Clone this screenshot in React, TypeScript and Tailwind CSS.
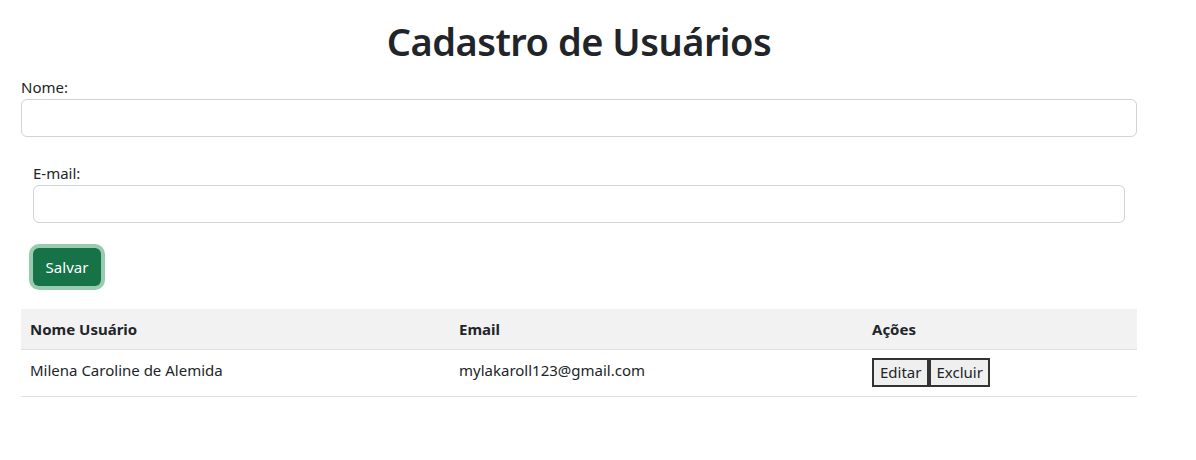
import React from "react";

export default function App() {
  return (
    <div
      className="w-[1196px] h-[460px] bg-white text-[#212529] text-[16px] leading-[24px]"
      style={{ fontFamily: '"Noto Sans", "Open Sans", sans-serif' }}
    >
      <div className="ml-[21px] w-[1116px] pt-[17px]">
        <h1 className="text-center text-[38px] leading-[48px] font-semibold tracking-[-0.5px] mb-[10px]">
          Cadastro de Usuários
        </h1>
        <label className="block text-[15px] leading-[24px]">Nome:</label>
        <input
          type="text"
          className="block w-full h-[38px] border border-[#ced4da] rounded-[6px] bg-white px-3"
        />
        <div className="mt-[12px] p-[12px]">
          <label className="block text-[15px] leading-[24px]">E-mail:</label>
          <input
            type="email"
            className="block w-full h-[38px] border border-[#ced4da] rounded-[6px] bg-white px-3"
          />
          <button
            type="button"
            className="mt-[25px] h-[38px] w-[68px] rounded-[6px] bg-[#157347] text-white text-[15px] ring-4 ring-[#98cbb0]"
          >
            Salvar
          </button>
        </div>
        <table className="mt-[11px] w-full border-collapse text-[15px]">
          <thead>
            <tr className="bg-[#f2f2f2] border-b border-[#dee2e6]">
              <th className="w-[430px] text-left font-bold px-[9px] py-[8px]">Nome Usuário</th>
              <th className="w-[413px] text-left font-bold px-[8px] py-[8px]">Email</th>
              <th className="text-left font-bold px-[8px] py-[8px]">Ações</th>
            </tr>
          </thead>
          <tbody>
            <tr className="border-b border-[#dee2e6]">
              <td className="px-[9px] pt-[8px] pb-[14px] align-top">Milena Caroline de Alemida</td>
              <td className="px-[8px] pt-[8px] pb-[14px] align-top">mylakaroll123@gmail.com</td>
              <td className="px-[8px] pt-[8px] pb-[8px] align-top">
                <div className="flex">
                  <button
                    type="button"
                    className="h-[29px] px-[6px] bg-[#efefef] border-2 border-[#333] text-[15px] leading-none"
                  >
                    Editar
                  </button>
                  <button
                    type="button"
                    className="h-[29px] px-[5px] bg-[#efefef] border-2 border-[#333] text-[15px] leading-none"
                  >
                    Excluir
                  </button>
                </div>
              </td>
            </tr>
          </tbody>
        </table>
      </div>
    </div>
  );
}
